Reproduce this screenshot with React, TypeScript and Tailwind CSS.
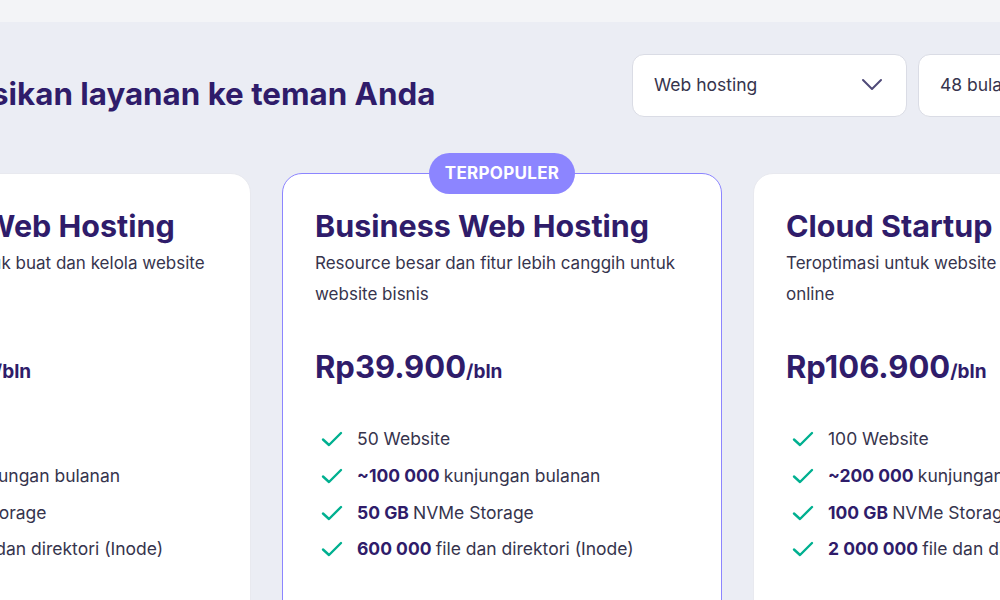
type Feature = { bold?: string; text: string };

type Plan = {
  name: string;
  desc: string;
  price: string;
  popular?: boolean;
  features: Feature[];
};

const plans: Plan[] = [
  {
    name: "Premium Web Hosting",
    desc: "Solusi lengkap untuk buat dan kelola website",
    price: "Rp22.900",
    features: [
      { text: "100 Website" },
      { bold: "~25 000", text: "kunjungan bulanan" },
      { bold: "20 GB", text: "SSD Storage" },
      { bold: "400 000", text: "file dan direktori (Inode)" },
    ],
  },
  {
    name: "Business Web Hosting",
    desc: "Resource besar dan fitur lebih canggih untuk website bisnis",
    price: "Rp39.900",
    popular: true,
    features: [
      { text: "50 Website" },
      { bold: "~100 000", text: "kunjungan bulanan" },
      { bold: "50 GB", text: "NVMe Storage" },
      { bold: "600 000", text: "file dan direktori (Inode)" },
    ],
  },
  {
    name: "Cloud Startup",
    desc: "Teroptimasi untuk website bisnis dan toko online",
    price: "Rp106.900",
    features: [
      { text: "100 Website" },
      { bold: "~200 000", text: "kunjungan bulanan" },
      { bold: "100 GB", text: "NVMe Storage" },
      { bold: "2 000 000", text: "file dan direktori (Inode)" },
    ],
  },
];

function CheckIcon() {
  return (
    <svg width="22" height="16" viewBox="0 0 22 16" fill="none" className="shrink-0">
      <path d="M2 8.5 L8 14 L20 2" stroke="#00b090" strokeWidth="2.4" strokeLinecap="round" strokeLinejoin="round" />
    </svg>
  );
}

function Chevron() {
  return (
    <svg width="22" height="14" viewBox="0 0 22 14" fill="none">
      <path d="M2 2 L11 11 L20 2" stroke="#4f4a78" strokeWidth="2" strokeLinecap="round" strokeLinejoin="round" />
    </svg>
  );
}

function PlanCard({ plan }: { plan: Plan }) {
  return (
    <div
      className={
        plan.popular
          ? "relative w-[440px] shrink-0 rounded-[20px] border-[1.5px] border-[#8c85ff] bg-white px-8 pt-[32px] pb-16"
          : "relative w-[440px] shrink-0 rounded-[20px] border border-[#e8e9ef] bg-white px-8 pt-[32px] pb-16"
      }
    >
      {plan.popular && (
        <div className="absolute left-1/2 top-[-21px] -translate-x-1/2 rounded-full bg-[#8c85ff] h-[41px] w-[146px] flex items-center justify-center text-[17px] font-bold text-white tracking-[0.3px]">
          TERPOPULER
        </div>
      )}
      <h3 className="text-[30.5px] leading-[40px] font-bold text-[#2f1c6a] whitespace-nowrap">{plan.name}</h3>
      <p className="mt-[2px] min-h-[62px] text-[17px] leading-[31px] text-[#36344d]">{plan.desc}</p>
      <div className="mt-[37px] flex items-baseline text-[#2f1c6a] font-bold">
        <span className="text-[31px] leading-[40px]">{plan.price}</span>
        <span className="text-[19px]">/bln</span>
      </div>
      <ul className="mt-[40px] flex flex-col gap-[12.8px] pl-[6px]">
        {plan.features.map((f, i) => (
          <li key={i} className="flex items-center gap-[14px] text-[17.5px] leading-[24px] text-[#36344d] whitespace-nowrap">
            <CheckIcon />
            <span>
              {f.bold && <b className="font-bold text-[#2f1c6a]">{f.bold} </b>}
              {f.text}
            </span>
          </li>
        ))}
      </ul>
    </div>
  );
}

function Select({ label }: { label: string }) {
  return (
    <div className="w-[275px] h-[63px] shrink-0 rounded-[12px] border border-[#dadce5] bg-white flex items-center justify-between pl-[21px] pr-[23px]">
      <span className="text-[17.5px] text-[#36344d]">{label}</span>
      <Chevron />
    </div>
  );
}

export default function App() {
  return (
    <div
      className="w-[1000px] h-[600px] overflow-hidden bg-[#ebedf4]"
      style={{ fontFamily: "Inter, 'Noto Sans', sans-serif" }}
    >
      <div className="h-[22px] bg-[#f3f4f7]" />
      <div className="ml-[-189px] w-[1382px] pt-[31px]">
        <div className="flex items-center justify-between">
          <h2 className="text-[31.3px] font-bold text-[#2f1c6a] whitespace-nowrap mt-[18px]">
            Rekomendasikan layanan ke teman Anda
          </h2>
          <div className="flex gap-[11px]">
            <Select label="Web hosting" />
            <Select label="48 bulan" />
          </div>
        </div>
        <div className="mt-[55px] flex gap-[31px]">
          {plans.map((p) => (
            <PlanCard key={p.name} plan={p} />
          ))}
        </div>
      </div>
    </div>
  );
}
